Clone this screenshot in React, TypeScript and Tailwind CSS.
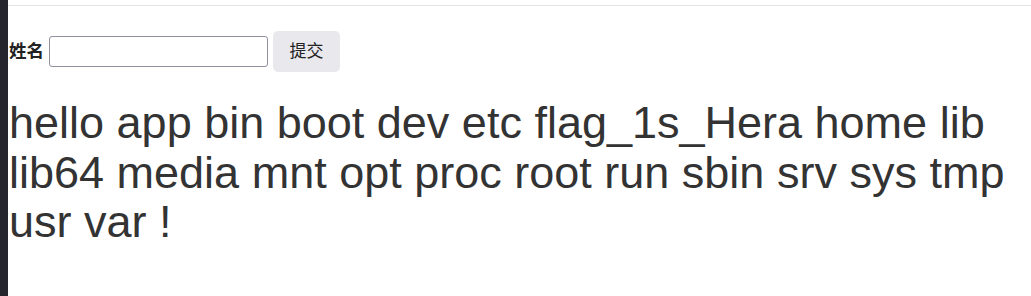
import React, { useState } from 'react';

// Simple page: a dark rail on the left, a name form and the command output below
export default function App() {
  const [name, setName] = useState('');

  const output =
    'hello app bin boot dev etc flag_1s_Hera home lib lib64 media mnt opt proc root run sbin srv sys tmp usr var !';

  return (
    <div className="flex h-[296px] w-full bg-white">
      {/* Left rail */}
      <div className="w-2 shrink-0 bg-[#25252e]" />

      <div className="flex-1 min-w-0 pt-[5px]">
        <div className="border-t border-[#e4e4e4]" />

        <div className="pl-px pr-[20px]">
          <form
            className="mt-[25px] flex items-center gap-[5px]"
            onSubmit={(e) => e.preventDefault()}
          >
            <label
              htmlFor="name"
              className="text-[17.5px] font-bold leading-none text-[#222] [font-family:'Liberation_Sans','Noto_Sans_CJK_SC',sans-serif]"
            >
              姓名
            </label>
            <input
              id="name"
              value={name}
              onChange={(e) => setName(e.target.value)}
              className="h-[31px] w-[219px] rounded-[3px] border border-[#8f8f9d] bg-white px-1 text-[17px] outline-none"
            />
            <button
              type="submit"
              className="h-[41px] w-[67px] rounded-[5px] bg-[#e9e9ed] text-[17px] text-[#222] [font-family:'Liberation_Sans','Noto_Sans_CJK_SC',sans-serif]"
            >
              提交
            </button>
          </form>

          <h1 className="mt-[26px] text-[45px] font-normal leading-[49.5px] text-[#333] [font-family:'Liberation_Sans',Arial,sans-serif]">
            {output}
          </h1>
        </div>
      </div>
    </div>
  );
}
